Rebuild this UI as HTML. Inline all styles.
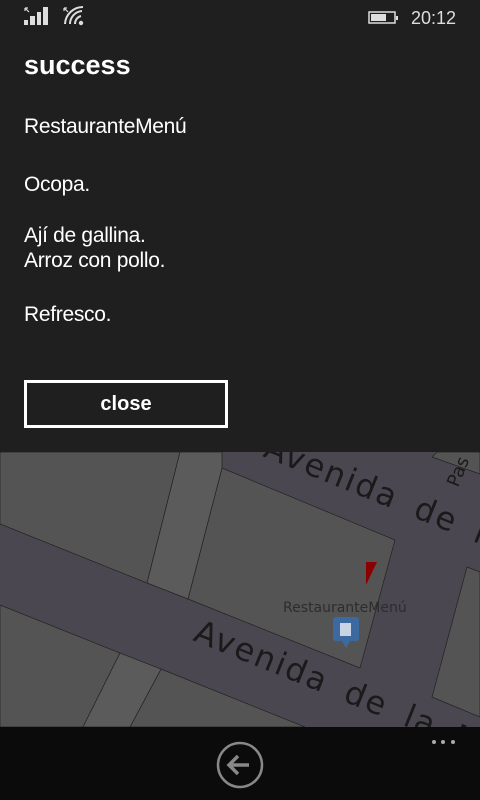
<!DOCTYPE html>
<html><head><meta charset="utf-8"><style>
body{margin:0;width:480px;height:800px;overflow:hidden;background:#1f1f1f;font-family:"Liberation Sans",sans-serif;color:#fff;position:relative}
.t{position:absolute;left:24px;font-size:21px;line-height:25px;white-space:nowrap;letter-spacing:-0.3px}
</style></head><body>
<svg style="position:absolute;left:0;top:0" width="480" height="40">
<g fill="#ddd">
<rect x="24" y="20" width="4" height="5"/><rect x="30" y="16" width="5" height="9"/><rect x="37" y="12" width="4" height="13"/><rect x="43" y="7" width="5" height="18"/>
<path d="M25 8 l4 4 M25 8 h3 M25 8 v3" stroke="#ddd" stroke-width="1.2" fill="none"/>
<path d="M64 8 l4 4 M64 8 h3 M64 8 v3" stroke="#ddd" stroke-width="1.2" fill="none"/>
<circle cx="81" cy="23" r="2.2"/>
</g>
<g stroke="#ddd" stroke-width="2" fill="none"><path d="M75 24 A8 8 0 0 1 81 16"/><path d="M70 24 A13 13 0 0 1 82 11"/><path d="M65 24 A18 18 0 0 1 83 7"/></g>
<rect x="369" y="12" width="26" height="11" stroke="#ddd" stroke-width="1.5" fill="none"/><rect x="371" y="14" width="15" height="7" fill="#ddd"/><rect x="396" y="16" width="2" height="4" fill="#ddd"/>
<text x="411" y="24" font-size="18" fill="#ddd" font-family="Liberation Sans">20:12</text>
</svg>
<div style="position:absolute;left:24px;top:50px;font-size:27px;font-weight:bold">success</div>
<div class="t" style="top:114px">RestauranteMenú</div>
<div class="t" style="top:172px">Ocopa.</div>
<div class="t" style="top:223px">Ají de gallina.<br>Arroz con pollo.</div>
<div class="t" style="top:302px">Refresco.</div>
<div style="position:absolute;left:24px;top:380px;width:198px;height:42px;border:3px solid #fff;text-align:center;line-height:42px;font-size:20px;font-weight:bold">close</div>
<svg style="position:absolute;left:0;top:452px" width="480" height="275">
<rect width="480" height="275" fill="#4b4751"/>
<g fill="#545454" stroke="#222" stroke-width="0.7">
<polygon points="0,0 180,0 147,131 0,72"/>
<polygon points="222,16 395,88 360,216 188,147"/>
<polygon points="467,115 480,120 480,265 432,245"/>
<polygon points="0,153 120,201 83,275 0,275"/>
<polygon points="161,217 305,275 130,275"/>
<polygon points="437,0 480,0 480,22 432,5"/>
</g>
<g fill="#5b5b5b" stroke="#222" stroke-width="0.7">
<polygon points="180,0 222,0 222,16 188,147 147,131"/>
<polygon points="120,201 161,217 130,275 83,275"/>
</g>
<g fill="#1a1a1a" font-family="DejaVu Sans" font-size="32" letter-spacing="2" word-spacing="8">
<text x="262" y="4" transform="rotate(22 262 4)">Avenida de la</text>
<text x="192" y="188" transform="rotate(22 192 188)">Avenida de la M</text>
<text x="458" y="36" font-size="18" letter-spacing="0" transform="rotate(-68 458 36)">Pas</text>
</g>
<polygon points="366,110 377,110 366,133" fill="#8a0000"/>
<text x="283" y="160" font-size="14" fill="#2d2d2d" font-family="DejaVu Sans">RestauranteMenú</text>
<rect x="333" y="165" width="26" height="24" rx="3" fill="#3c6aa0"/><polygon points="342,189 350,189 346,196" fill="#3c6aa0"/>
<rect x="340" y="171" width="11" height="13" fill="#c8d4e4"/>
</svg>
<div style="position:absolute;left:0;top:727px;width:480px;height:73px;background:#0b0b0b"></div>
<svg style="position:absolute;left:0;top:727px" width="480" height="73">
<circle cx="240" cy="38" r="22" stroke="#888" stroke-width="2.5" fill="none"/>
<path d="M229 38 h20 M238 29 l-9 9 9 9" stroke="#888" stroke-width="3.5" fill="none"/>
<g fill="#aaa"><circle cx="434" cy="15" r="2"/><circle cx="443" cy="15" r="2"/><circle cx="453" cy="15" r="2"/></g>
</svg>
</body></html>
